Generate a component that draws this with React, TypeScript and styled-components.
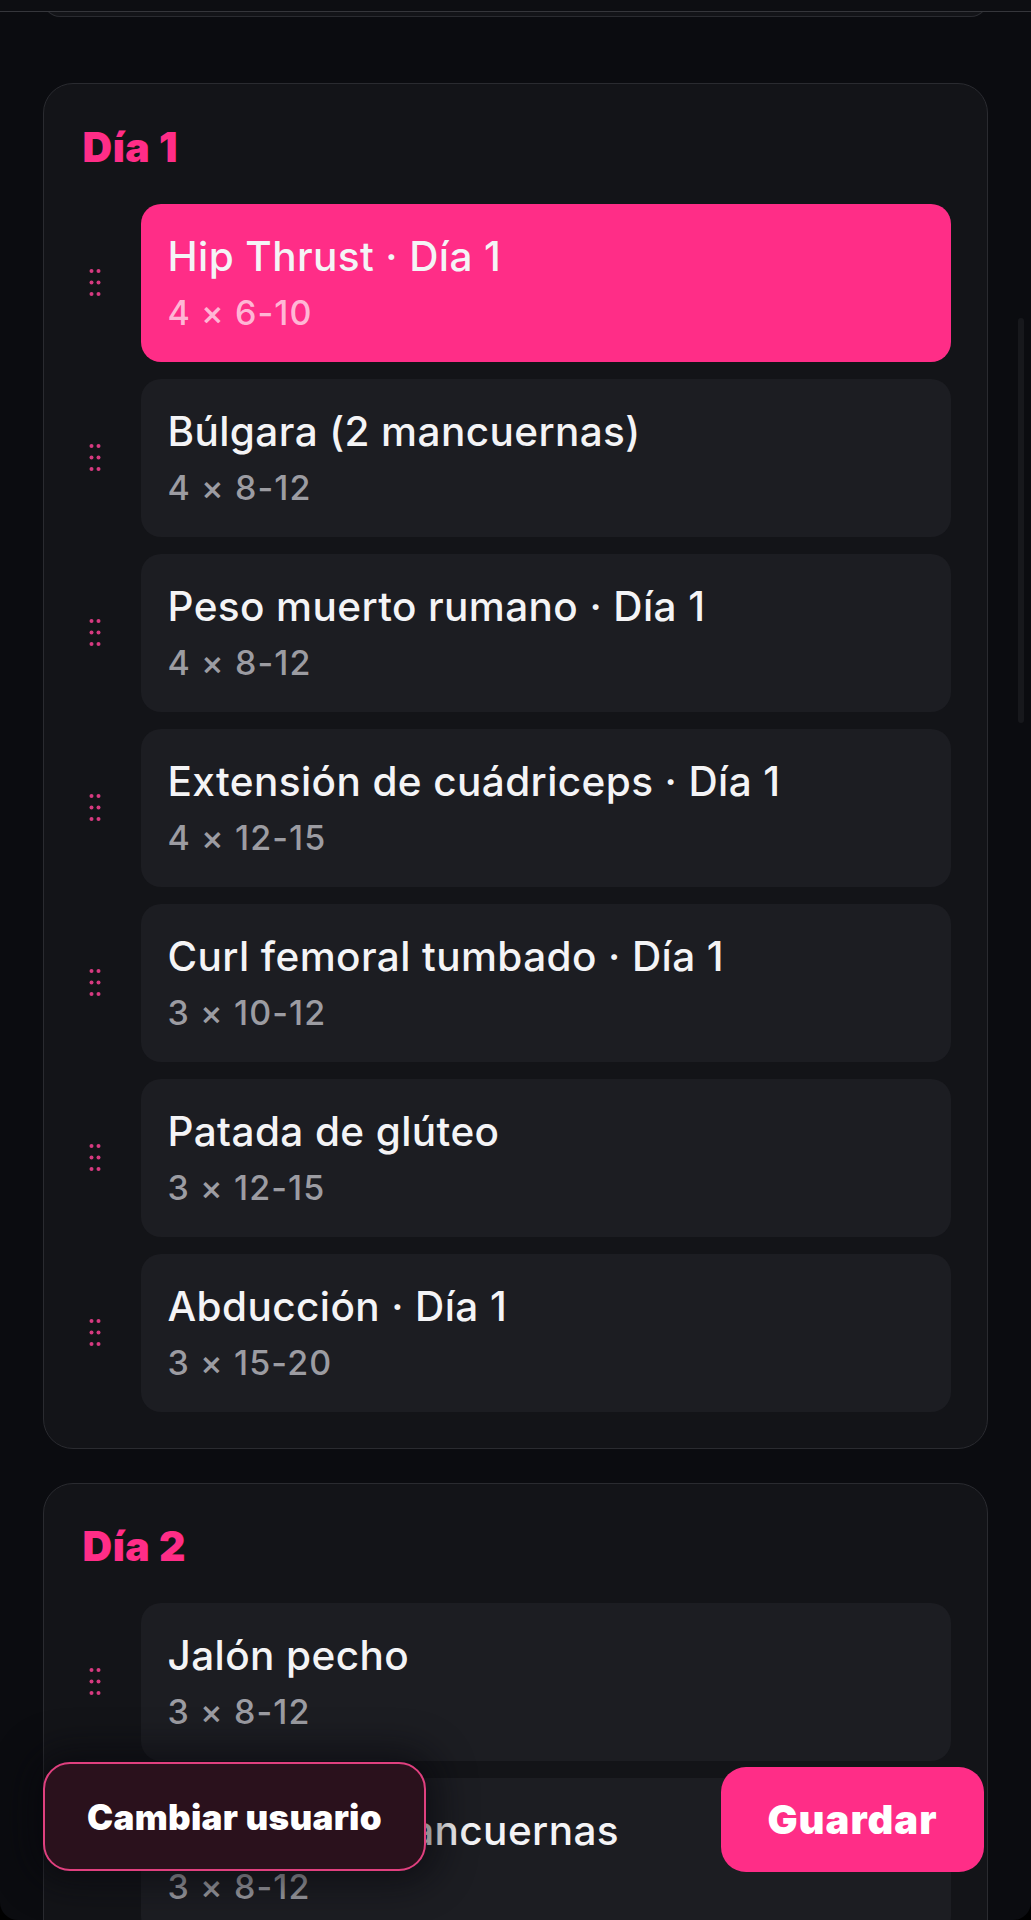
import React from 'react';
import styled, { createGlobalStyle } from 'styled-components';

const GlobalStyle = createGlobalStyle`
  html, body {
    margin: 0;
    padding: 0;
    background: #000;
  }
  body {
    font-family: Inter, "Noto Sans", "Liberation Sans", sans-serif;
    -webkit-font-smoothing: antialiased;
  }
`;

const palette = {
  page: '#0b0c10',
  card: '#131418',
  cardBorder: '#2a2b30',
  item: '#1c1d22',
  pink: '#ff2d87',
  text: '#f4f4f6',
  muted: '#9c9ca2',
};

const Screen = styled.div`
  position: relative;
  width: 1031px;
  height: 1920px;
  overflow: hidden;
  background: ${palette.page};
  border-radius: 0 0 18px 18px;
`;

const TopBar = styled.div`
  position: absolute;
  top: 0;
  left: 0;
  right: 0;
  height: 11px;
  background: #0d0e12;
  border-bottom: 1.5px solid #35363b;
  z-index: 3;
`;

const ScrollArea = styled.div`
  display: flex;
  flex-direction: column;
  gap: 34px;
  padding: 0 43px;
`;

const PrevCardTail = styled.div`
  height: 16px;
  margin-bottom: 32px;
  background: ${palette.card};
  border: 1.5px solid ${palette.cardBorder};
  border-top: none;
  border-radius: 0 0 30px 30px;
`;

const DayCard = styled.section`
  background: ${palette.card};
  border: 1.5px solid ${palette.cardBorder};
  border-radius: 30px;
  padding: 38.5px 36.5px 36px 38.5px;
`;

const DayTitle = styled.h2`
  margin: 0 0 33px;
  font-size: 41px;
  line-height: 48px;
  font-weight: 900;
  color: ${palette.pink};
  letter-spacing: 0.5px;
`;

const List = styled.div`
  display: flex;
  flex-direction: column;
  gap: 17px;
`;

const Row = styled.div`
  display: flex;
  align-items: center;
`;

const Handle = styled.div`
  width: 58px;
  flex: none;
  display: flex;
  align-items: center;
  padding-left: 6px;
  box-sizing: border-box;
`;

const Item = styled.div<{ $active?: boolean }>`
  flex: 1;
  box-sizing: border-box;
  height: 158px;
  padding: 29px 27px 29px;
  border-radius: 20px;
  background: ${(p) => (p.$active ? palette.pink : palette.item)};
`;

const ItemName = styled.div`
  font-size: 40.5px;
  line-height: 48px;
  font-weight: 500;
  color: ${palette.text};
  white-space: nowrap;
  letter-spacing: 0.4px;
`;

const ItemSets = styled.div<{ $active?: boolean }>`
  margin-top: 12px;
  font-size: 34px;
  line-height: 40px;
  font-weight: 500;
  letter-spacing: 1.1px;
  color: ${(p) => (p.$active ? 'rgba(255, 255, 255, 0.68)' : palette.muted)};
`;

const ScrollIndicator = styled.div`
  position: absolute;
  top: 318px;
  right: 7px;
  width: 6px;
  height: 405px;
  border-radius: 3px;
  background: #17181c;
`;

const BottomBar = styled.div`
  position: absolute;
  left: 43px;
  right: 47px;
  bottom: 48px;
  display: flex;
  justify-content: space-between;
  align-items: flex-end;
  z-index: 4;
`;

const GhostButton = styled.button`
  width: 383px;
  height: 109px;
  border-radius: 27px;
  border: 2.5px solid #e0407f;
  background: #2a111c;
  color: #fff;
  font-family: inherit;
  font-size: 35px;
  font-weight: 900;
  letter-spacing: 0.3px;
  box-shadow: 0 0 34px 14px rgba(8, 8, 12, 0.55);
  margin-bottom: 1px;
`;

const PrimaryButton = styled.button`
  width: 263px;
  height: 105px;
  border-radius: 25px;
  border: none;
  background: ${palette.pink};
  color: #fff;
  font-family: inherit;
  font-size: 40px;
  font-weight: 900;
  letter-spacing: 1px;
`;

const GripIcon = () => (
  <svg width='12' height='30' viewBox='0 0 12 30' fill='#d63a80'>
    <circle cx='2.5' cy='3' r='2' />
    <circle cx='9.5' cy='3' r='2' />
    <circle cx='2.5' cy='14.5' r='2' />
    <circle cx='9.5' cy='14.5' r='2' />
    <circle cx='2.5' cy='26' r='2' />
    <circle cx='9.5' cy='26' r='2' />
  </svg>
);

interface Exercise {
  name: string;
  sets: string;
  active?: boolean;
}

const days: { title: string; exercises: Exercise[] }[] = [
  {
    title: 'Día 1',
    exercises: [
      { name: 'Hip Thrust · Día 1', sets: '4 × 6-10', active: true },
      { name: 'Búlgara (2 mancuernas)', sets: '4 × 8-12' },
      { name: 'Peso muerto rumano · Día 1', sets: '4 × 8-12' },
      { name: 'Extensión de cuádriceps · Día 1', sets: '4 × 12-15' },
      { name: 'Curl femoral tumbado · Día 1', sets: '3 × 10-12' },
      { name: 'Patada de glúteo', sets: '3 × 12-15' },
      { name: 'Abducción · Día 1', sets: '3 × 15-20' },
    ],
  },
  {
    title: 'Día 2',
    exercises: [
      { name: 'Jalón pecho', sets: '3 × 8-12' },
      { name: 'Remo con mancuernas', sets: '3 × 8-12' },
      { name: 'Remo sentado', sets: '3 × 10-12' },
    ],
  },
];

const App: React.FC = () => {
  return (
    <Screen>
      <GlobalStyle />
      <TopBar />
      <ScrollArea>
        <PrevCardTail />
        {days.map((day) => (
          <DayCard key={day.title}>
            <DayTitle>{day.title}</DayTitle>
            <List>
              {day.exercises.map((ex) => (
                <Row key={ex.name}>
                  <Handle>
                    <GripIcon />
                  </Handle>
                  <Item $active={ex.active}>
                    <ItemName>{ex.name}</ItemName>
                    <ItemSets $active={ex.active}>{ex.sets}</ItemSets>
                  </Item>
                </Row>
              ))}
            </List>
          </DayCard>
        ))}
      </ScrollArea>
      <ScrollIndicator />
      <BottomBar>
        <GhostButton>Cambiar usuario</GhostButton>
        <PrimaryButton>Guardar</PrimaryButton>
      </BottomBar>
    </Screen>
  );
};

export default App;
